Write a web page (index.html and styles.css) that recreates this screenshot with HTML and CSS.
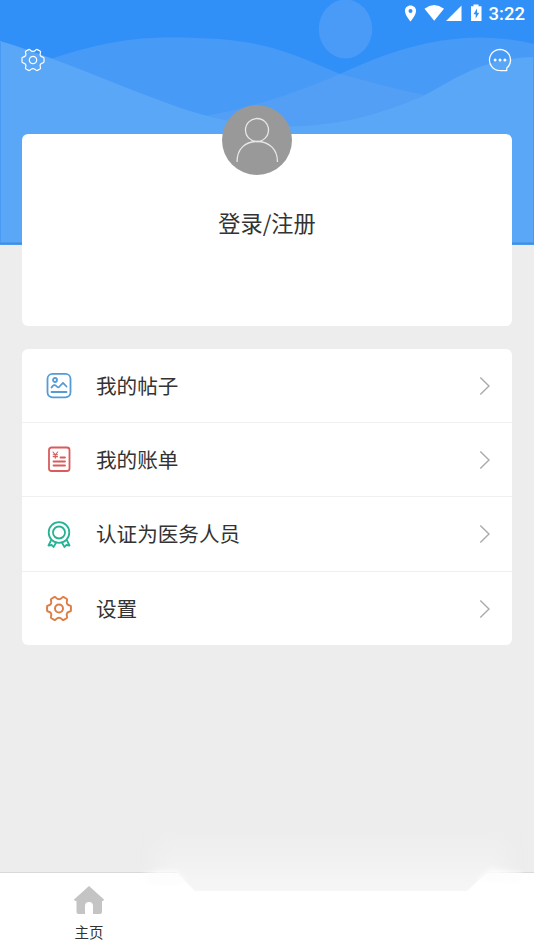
FILE: index.html
```html
<!DOCTYPE html>
<html lang="zh-CN">
<head>
<meta charset="utf-8">
<meta name="viewport" content="width=device-width">
<title>我的</title>
<link rel="stylesheet" href="styles.css">
</head>
<body>
<svg class="defs" width="0" height="0">
  <symbol id="gear" viewBox="-12 -12 24 24">
    <path d="M11-1.800V1.800Q11 2.700 10 2.800C7.500 3.200 6.500 5 7.400 7.300Q7.900 8.400 7 9L4.400 10.400Q3.500 10.800 2.900 10C1.200 8.300-1.200 8.300-2.900 10Q-3.500 10.800-4.400 10.400L-7 9Q-7.900 8.400-7.400 7.300C-6.500 5-7.500 3.200-10 2.800Q-11 2.700-11 1.800V-1.800Q-11-2.700-10-2.800C-7.500-3.200-6.500-5-7.400-7.300Q-7.900-8.400-7-9L-4.400-10.400Q-3.500-10.800-2.900-10C-1.200-8.300 1.200-8.300 2.900-10Q3.500-10.800 4.400-10.400L7-9Q7.900-8.400 7.400-7.300C6.500-5 7.500-3.200 10-2.800Q11-2.700 11-1.800Z"/>
    <circle r="3.700"/>
  </symbol>
  <symbol id="arrow" viewBox="0 0 12 20"><path d="M1.300 1.500 10 10 1.300 18.500"/></symbol>
</svg>
<div class="app">
  <svg class="hero" viewBox="0 0 534 245" preserveAspectRatio="none">
    <rect width="534" height="245" fill="#3190f8"/>
    <ellipse cx="345.500" cy="29" rx="26.700" ry="29.500" fill="#499bf7"/>
    <path d="M50 59C100 43 130 38 165 37.500C255 37 280 48 340 74C370 82 400 90 425 95V245H50Z" fill="#489af7"/>
    <path d="M200 117C260 106 300 91 340 74C400 46 440 38 480 37.500Q510 38 534 44V245H200Z" fill="#489af7"/>
    <path d="M200 117C260 106 300 91 340 74C370 82 400 90 425 95L400 130H200Z" fill="#529ff5"/>
    <path d="M0 41C70 62 145 98 200 114C300 143 380 115 425 95C460 76 485 58 534 57V245H0Z" fill="#5aa7f7"/>
    <path d="M0 243.500H534" stroke="#3e90df" stroke-width="2"/>
    <path d="M.5 42V243M533.500 46V243" stroke="#489af3"/>
  </svg>
  <header class="status">
    <svg class="status-icons" viewBox="0 0 80 20">
      <path fill-rule="evenodd" d="M6.500 2.500C3.200 2.500 1 4.900 1 7.900C1 12 6.500 18.500 6.500 18.500S12 12 12 7.900C12 4.900 9.800 2.500 6.500 2.500M6.500 6A2 2 0 1 1 6.500 10A2 2 0 0 1 6.500 6"/>
      <path d="M20.500 5.700Q30 -1.500 40 5.700L30.200 17.800ZM57.500 2.500V18H42Z"/>
      <path fill-rule="evenodd" d="M69.500 1.500H74.500V3.200H77.500V18H67V3.200H69.500ZM73 5.500 69.500 11.300H71.700V15.500L75.200 9.700H73Z"/>
    </svg>
    <span class="clock">3:22</span>
  </header>
  <nav class="tools">
    <svg class="tool"><use href="#gear"/></svg>
    <svg class="tool" viewBox="-12 -12 24 24">
      <path d="M0 10.500A10.500 10.500 0 1 1 6.800 8V10.600H0M6.800 8A10.500 10.500 0 0 0 0-10.500"/>
      <g class="dots"><circle cx="-4.900" r="1.500"/><circle r="1.500"/><circle cx="4.900" r="1.500"/></g>
    </svg>
  </nav>
  <main>
    <section class="card profile">
      <svg class="avatar" viewBox="0 0 70 70">
        <circle cx="35" cy="35" r="35" fill="#999"/>
        <g fill="none" stroke="#e8e8e8" stroke-width="1.300"><circle cx="35" cy="25" r="11.500"/><path d="M15 57C15 44 23 36.500 35 36.500S55.500 44 55.500 57"/></g>
      </svg>
      <h1>登录/注册</h1>
    </section>
    <section class="card menu">
      <div class="row">
        <svg class="icon blue" viewBox="0 0 26 27"><rect x="1.500" y="1.800" width="23" height="23.500" rx="5"/><circle cx="9" cy="8" r="2"/><path d="M5.500 15.500Q8 11.500 10.300 14T13.500 14.500L17 10.800 20.500 14.500M5.500 20H20.500"/></svg>
        <span>我的帖子</span><svg class="arrow"><use href="#arrow"/></svg>
      </div>
      <div class="row">
        <svg class="icon red" viewBox="0 0 26 27"><rect x="3" y="1.500" width="20.500" height="23.500" rx="2.500"/><path d="M14.500 11.500H19M7.500 15.500H19M7.500 19.500H19"/><path class="thin" d="M7 6 9.300 8.800 11.700 6M9.300 8.800V12.300M7.200 8.800H11.500M7.200 10.600H11.500"/></svg>
        <span>我的账单</span><svg class="arrow"><use href="#arrow"/></svg>
      </div>
      <div class="row">
        <svg class="icon green" viewBox="0 0 26 27"><circle cx="13" cy="11.500" r="10.300"/><circle cx="13" cy="11.500" r="6"/><path d="M5 19.500 2.500 24.500 5.800 24 7.500 26 10 21.800M21 19.500 23.500 24.500 20.200 24 18.500 26 16 21.800"/></svg>
        <span>认证为医务人员</span><svg class="arrow"><use href="#arrow"/></svg>
      </div>
      <div class="row">
        <svg class="icon orange"><use href="#gear"/></svg>
        <span>设置</span><svg class="arrow"><use href="#arrow"/></svg>
      </div>
    </section>
  </main>
  <footer class="tabs">
    <a class="tab">
      <svg class="home" viewBox="0 0 30 28"><path d="M15 0 30 13.500Q30 15 28 15V26Q28 28 26 28H19V20Q19 16 15 16T11 20V28H4.500Q2.500 28 2.500 26V15Q0 15 0 13.500Z"/></svg>
      <span>主页</span>
    </a>
  </footer>
  <svg class="haze" viewBox="0 0 394 60">
    <defs>
      <linearGradient id="fade" x2="0" y2="1"><stop stop-color="#ededed"/><stop offset="1" stop-color="#f6f6f6"/></linearGradient>
      <linearGradient id="sides"><stop stop-color="#000"/><stop offset=".1" stop-color="#fff"/><stop offset=".9" stop-color="#fff"/><stop offset="1" stop-color="#000"/></linearGradient>
      <mask id="edge"><rect width="384" height="60" fill="url(#sides)"/></mask>
      <filter id="soft" x="-20%" y="-50%" width="140%" height="200%"><feGaussianBlur stdDeviation="2.500"/></filter>
    </defs>
    <path d="M0 0H384V41H350L340 48 327 60H55L42 47 36 41H0Z" fill="url(#fade)" mask="url(#edge)"/>
    <path d="M2 44 18 40H36L46 50 42 54H10ZM336 50 351 38 382 42 380 52Z" fill="#fdfdfd" filter="url(#soft)"/>
  </svg>
</div>
</body>
</html>
```
FILE: styles.css
```css
* { box-sizing: border-box; }
body { margin: 0; background: #ededed; color: #333; font-family: "Noto Sans CJK SC", sans-serif; }
.defs { position: absolute; }
.app { position: relative; width: 534px; height: 950px; overflow: hidden; display: flex; flex-direction: column; isolation: isolate; }
.hero { position: absolute; inset: 0 0 auto; width: 534px; height: 245px; z-index: -1; }
.status { height: 28px; padding: 3px 9px 0 0; display: flex; justify-content: flex-end; align-items: flex-start; gap: 5px; color: #fff; }
.status-icons { width: 80px; height: 20px; fill: #fff; }
.clock { font: 500 18.5px/22px Roboto, sans-serif; }
.tools { height: 62px; padding: 1px 22px 0 21px; display: flex; justify-content: space-between; align-items: center; }
.tool { width: 24px; height: 24px; fill: none; stroke: #fff; stroke-width: 1.2; stroke-linejoin: round; }
.dots { fill: #fff; stroke: none; }
main { flex: 1; padding: 44px 22px 0; display: flex; flex-direction: column; gap: 23px; }
.card { background: #fff; border-radius: 6px; }
.profile { height: 192px; display: flex; flex-direction: column; align-items: center; }
.avatar { width: 70px; height: 70px; margin: -29px 21px 0 0; flex: none; }
h1 { margin: 30px 0 0; font-size: 22.2px; line-height: 34px; font-weight: 400; }
.menu { height: 296px; display: grid; grid-template-rows: 73px 74px 75px 74px; }
.row { padding: 0 21px 0 24px; display: flex; align-items: center; font-size: 20.6px; }
.row + .row { border-top: 1px solid #f0f0f0; }
.row span { flex: 1; margin: -2px 0 0 24px; }
.icon { width: 26px; height: 27px; fill: none; stroke-width: 1.8; stroke-linecap: round; stroke-linejoin: round; }
.thin { stroke-width: 1.1; }
.blue { stroke: #559bd5; }
.red { stroke: #d95b5b; }
.green { stroke: #27b296; }
.orange { stroke: #df7b44; }
.arrow { width: 12px; height: 20px; fill: none; stroke: #aaa; stroke-width: 1.4; }
.tabs { height: 78px; background: #fff; border-top: 1px solid #d9d9d9; display: flex; }
.tab { width: 178px; padding-top: 13px; display: flex; flex-direction: column; align-items: center; font-size: 14.5px; line-height: 22px; }
.home { width: 30px; height: 28px; margin-bottom: 7px; fill: #c4c4c4; }
.haze { position: absolute; left: 140px; top: 831px; width: 394px; height: 60px; }
```
